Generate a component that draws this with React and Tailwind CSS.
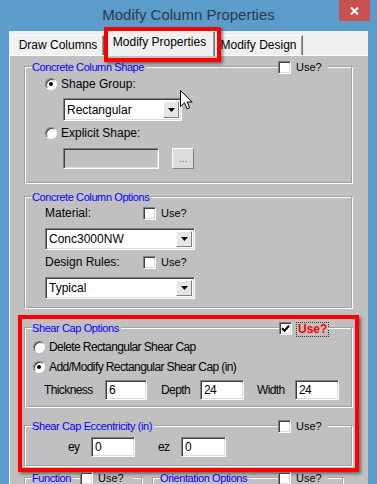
import React from 'react';

const sunken =
  'border border-t-[#808080] border-l-[#808080] border-b-white border-r-white shadow-[inset_1px_1px_0_#404040,inset_-1px_-1px_0_#dcdcdc]';

const Line = ({ className = '' }) => (
  <div className={`h-[2px] border-t border-b border-t-[#a0a0a0] border-b-white ${className}`} />
);

function Check({ checked }) {
  return (
    <span className={`w-[13px] h-[13px] shrink-0 bg-white flex items-center justify-center ${sunken}`}>
      {checked && (
        <svg width="9" height="9" viewBox="0 0 9 9">
          <path d="M1 4.2 L3.5 6.7 L8 1.8" fill="none" stroke="#000" strokeWidth="2" />
        </svg>
      )}
    </span>
  );
}

function Radio({ on }) {
  return (
    <span className="w-[12px] h-[12px] shrink-0 rounded-full bg-white border border-t-[#808080] border-l-[#808080] border-b-white border-r-white shadow-[inset_1px_1px_0_#404040] flex items-center justify-center">
      {on && <span className="w-[4px] h-[4px] rounded-full bg-black" />}
    </span>
  );
}

function Select({ value, className = '' }) {
  return (
    <div className={`flex bg-white p-[2px] ${sunken} ${className}`}>
      <span className="flex-1 pl-[1px] flex items-center text-[12px] leading-none">{value}</span>
      <span className="w-[16px] bg-[#e6e6e6] border border-t-white border-l-white border-r-[#808080] border-b-[#808080] flex items-center justify-center">
        <svg width="7" height="4" viewBox="0 0 7 4">
          <path d="M0 0H7L3.5 4Z" fill="#000" />
        </svg>
      </span>
    </div>
  );
}

function Field({ value, className = '' }) {
  return (
    <div className={`h-[20px] bg-white pl-[3px] flex items-center text-[12px] tracking-[-0.6px] leading-none ${sunken} ${className}`}>
      {value}
    </div>
  );
}

function Group({ title, use, checked, focus, useCls = 'w-[32px]', tailCls = 'w-[25px]', className = '', children }) {
  return (
    <div className={`flex flex-col shrink-0 ${className}`}>
      <div className="flex items-center h-[14px]">
        <Line className="w-[8px]" />
        <span className="pr-[2px] text-[11px] leading-none tracking-[-0.4px] text-[#0000ff] whitespace-nowrap">{title}</span>
        <Line className="flex-1" />
        {use && (
          <>
            <Check checked={checked} />
            {focus ? (
              <span className={`ml-[4px] ${useCls}`}>
                <span className="inline-block border border-dotted border-[#204040] px-[1px] text-[12px] leading-[13px] font-bold text-[#ff0000]">Use?</span>
              </span>
            ) : (
              <span className={`ml-[5px] text-[11px] leading-none ${useCls}`}>Use?</span>
            )}
            <Line className={tailCls} />
          </>
        )}
      </div>
      <div className="flex-1 -mt-[7px] pt-[7px] flex flex-col items-start border-l border-r border-b border-l-[#a0a0a0] border-r-white border-b-white shadow-[inset_1px_0_0_#fff,inset_-1px_-1px_0_#a0a0a0]">
        {children}
      </div>
    </div>
  );
}

export default function App() {
  return (
    <div className="relative w-[377px] h-[484px] overflow-hidden bg-[#5b9cca] flex flex-col font-['Liberation_Sans',Arial,sans-serif] text-black">
      <div className="relative h-[31px] shrink-0 flex items-center justify-center">
        <span className="text-[15px] text-[#2b3a4a]">Modify Column Properties</span>
        <div className="absolute top-0 right-[7px] w-[31px] h-[21px] bg-[#c75050] flex items-center justify-center">
          <svg width="9" height="8" viewBox="0 0 9 8">
            <path d="M1 0.5 L8 7.5 M8 0.5 L1 7.5" stroke="#fff" strokeWidth="2" />
          </svg>
        </div>
      </div>

      <div className="mx-[9px] flex-1 min-h-0 flex flex-col bg-[#f0f0f0]">
        <div className="h-[24px] shrink-0 flex items-end pl-[3px] text-[12px]">
          <div className="w-[92px] h-[20px] pb-[2px] flex items-center justify-center border-t border-l border-t-white border-l-white border-r border-r-[#696969] shadow-[inset_-1px_0_0_#a0a0a0]">
            Draw Columns
          </div>
          <div className="relative z-10 w-[111px] h-[25px] -mb-[1px] pb-[4px] flex items-center justify-center bg-[#f0f0f0] border-t border-l border-t-white border-l-white border-r border-r-[#696969] shadow-[inset_-1px_0_0_#a0a0a0]">
            Modify Properties
            <div className="absolute -left-[1px] -top-[5px] w-[117px] h-[35px] border-[4px] border-[#ff0000] shadow-[2px_2px_3px_rgba(0,0,0,0.45)]" />
          </div>
          <div className="w-[88px] h-[20px] pb-[2px] flex items-center justify-center border-t border-t-white border-r border-r-[#696969] shadow-[inset_-1px_0_0_#a0a0a0]">
            Modify Design
          </div>
        </div>

        <div className="flex-1 min-h-0 flex flex-col items-start bg-[#c0c0c0] border-t border-l border-white overflow-hidden">
          <Group title="Concrete Column Shape" use className="mt-[4px] ml-[14px] w-[329px] h-[124px]">
            <div className="mt-[3px] ml-[20px] h-[14px] flex items-center gap-[4px] text-[12px]">
              <Radio on />
              <span>Shape Group:</span>
            </div>
            <Select value="Rectangular" className="mt-[7px] ml-[38px] w-[119px] h-[23px]" />
            <div className="mt-[5px] ml-[20px] h-[14px] flex items-center gap-[4px] text-[12px]">
              <Radio />
              <span>Explicit Shape:</span>
            </div>
            <div className="mt-[8px] ml-[38px] flex items-center">
              <div className={`w-[96px] h-[21px] bg-[#c0c0c0] ${sunken}`} />
              <div className="ml-[13px] w-[22px] h-[21px] bg-[#dcdcdc] border border-t-white border-l-white border-r-[#808080] border-b-[#808080] flex items-center justify-center text-[11px] text-[#808080] leading-none">
                ...
              </div>
            </div>
          </Group>

          <Group title="Concrete Column Options" className="mt-[6px] ml-[14px] w-[329px] h-[119px]">
            <div className="mt-[2px] ml-[20px] h-[14px] flex items-center text-[12px]">
              <span className="w-[98px]">Material:</span>
              <Check />
              <span className="ml-[5px] text-[11px]">Use?</span>
            </div>
            <Select value="Conc3000NW" className="mt-[8px] ml-[20px] w-[150px] h-[22px]" />
            <div className="mt-[5px] ml-[20px] h-[14px] flex items-center text-[12px]">
              <span className="w-[98px]">Design Rules:</span>
              <Check />
              <span className="ml-[5px] text-[11px]">Use?</span>
            </div>
            <Select value="Typical" className="mt-[8px] ml-[20px] w-[150px] h-[22px]" />
          </Group>

          <div className="mt-[6px] ml-[8px] w-[341px] h-[157px] shrink-0 border-[4px] border-[#ff0000] shadow-[2px_2px_3px_rgba(0,0,0,0.45)] px-[2px] pt-[2px] flex flex-col">
            <Group title="Shear Cap Options" use checked focus className="w-[329px] h-[87px]">
              <div className="mt-[5px] ml-[8px] h-[14px] flex items-center gap-[4px] text-[12px] tracking-[-0.6px]">
                <Radio />
                <span>Delete Rectangular Shear Cap</span>
              </div>
              <div className="mt-[6px] ml-[8px] h-[14px] flex items-center gap-[4px] text-[12px] tracking-[-0.6px]">
                <Radio on />
                <span>Add/Modify Rectangular Shear Cap (in)</span>
              </div>
              <div className="mt-[6px] ml-[19px] flex items-center text-[12px] tracking-[-0.6px]">
                <span className="w-[61px]">Thickness</span>
                <Field value="6" className="w-[42px]" />
                <span className="ml-[14px] w-[39px]">Depth</span>
                <Field value="24" className="w-[44px]" />
                <span className="ml-[13px] w-[38px]">Width</span>
                <Field value="24" className="w-[44px]" />
              </div>
            </Group>

            <Group title="Shear Cap Eccentricity (in)" use className="mt-[11px] w-[329px] h-[48px]">
              <div className="mt-[4px] ml-[43px] flex items-center text-[12px] tracking-[-0.6px]">
                <span className="w-[23px]">ey</span>
                <Field value="0" className="w-[44px]" />
                <span className="ml-[23px] w-[23px]">ez</span>
                <Field value="0" className="w-[45px]" />
              </div>
            </Group>
          </div>

          <div className="-mt-[1px] ml-[14px] flex items-start">
            <Group title="Function" use useCls="w-[35px]" tailCls="w-[10px]" className="w-[119px] h-[40px]" />
            <Group title="Orientation Options" use tailCls="w-[16px]" className="ml-[9px] w-[192px] h-[40px]" />
          </div>
        </div>
      </div>

      <svg className="absolute left-[180px] top-[90px]" width="13" height="20" viewBox="0 0 13 20">
        <path d="M0.5 0.5 V16.5 L4.5 12.8 L7 18.8 L9.6 17.7 L7.2 12 H12.2 Z" fill="#fff" stroke="#000" strokeWidth="1" />
      </svg>
    </div>
  );
}
